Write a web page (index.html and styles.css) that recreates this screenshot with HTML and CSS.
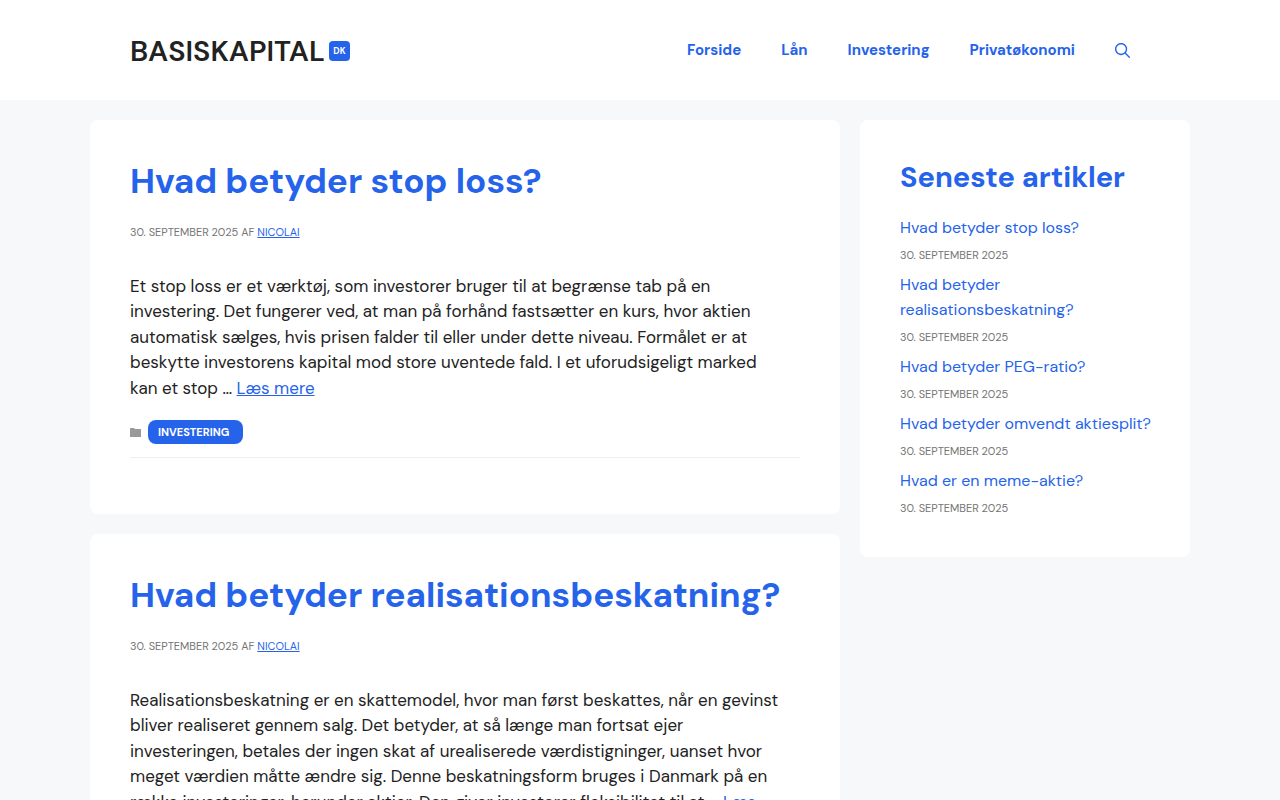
FILE: index.html
```html
<!DOCTYPE html>
<html lang="da">
<head>
    <meta charset="UTF-8">
    <meta name="viewport" content="width=device-width, initial-scale=1.0">
    <title>Basiskapital.dk</title>
    <link rel="stylesheet" href="styles.css">
</head>
<body>
    <header class="site-header">
        <div class="inside-header">
            <a class="site-logo" href="#">
                <span class="logo-name">BASISKAPITAL</span>
                <span class="logo-badge">DK</span>
            </a>
            <nav class="main-nav">
                <a href="#">Forside</a>
                <a href="#">Lån</a>
                <a href="#">Investering</a>
                <a href="#">Privatøkonomi</a>
                <a class="search-link" href="#" aria-label="Søg">
                    <svg viewBox="0 0 512 512" width="15" height="15" aria-hidden="true">
                        <path fill-rule="evenodd" clip-rule="evenodd" d="M208 48c-88.366 0-160 71.634-160 160s71.634 160 160 160 160-71.634 160-160S296.366 48 208 48zM0 208C0 93.125 93.125 0 208 0s208 93.125 208 208c0 48.741-16.765 93.566-44.843 129.024l133.826 134.018c9.366 9.379 9.355 24.575-.025 33.941-9.379 9.366-24.575 9.355-33.941-.025L337.238 370.987C301.747 399.167 256.839 416 208 416 93.125 416 0 322.875 0 208z"/>
                    </svg>
                </a>
            </nav>
        </div>
    </header>

    <div class="site-content">
        <main class="content-area">
            <article class="post">
                <h2 class="entry-title"><a href="#">Hvad betyder stop loss?</a></h2>
                <div class="entry-meta">30. september 2025 af <a href="#">Nicolai</a></div>
                <p class="entry-summary">Et stop loss er et værktøj, som investorer bruger til at begrænse tab på en investering. Det fungerer ved, at man på forhånd fastsætter en kurs, hvor aktien automatisk sælges, hvis prisen falder til eller under dette niveau. Formålet er at beskytte investorens kapital mod store uventede fald. I et uforudsigeligt marked kan et stop … <a href="#">Læs mere</a></p>
                <footer class="entry-footer">
                    <svg class="folder-icon" viewBox="0 0 11 9" width="11" height="9" aria-hidden="true">
                        <path d="M0 .5Q0 0 .5 0H4l1 1h5.500q.5 0 .5.5v7q0 .5-.5.5H.5Q0 9 0 8.500z"/>
                    </svg>
                    <a class="cat-link" href="#">Investering</a>
                </footer>
            </article>

            <article class="post">
                <h2 class="entry-title"><a href="#">Hvad betyder realisationsbeskatning?</a></h2>
                <div class="entry-meta">30. september 2025 af <a href="#">Nicolai</a></div>
                <p class="entry-summary">Realisationsbeskatning er en skattemodel, hvor man først beskattes, når en gevinst bliver realiseret gennem salg. Det betyder, at så længe man fortsat ejer investeringen, betales der ingen skat af urealiserede værdistigninger, uanset hvor meget værdien måtte ændre sig. Denne beskatningsform bruges i Danmark på en række investeringer, herunder aktier. Den giver investorer fleksibilitet til at … <a href="#">Læs mere</a></p>
                <footer class="entry-footer">
                    <svg class="folder-icon" viewBox="0 0 11 9" width="11" height="9" aria-hidden="true">
                        <path d="M0 .5Q0 0 .5 0H4l1 1h5.500q.5 0 .5.5v7q0 .5-.5.5H.5Q0 9 0 8.500z"/>
                    </svg>
                    <a class="cat-link" href="#">Investering</a>
                </footer>
            </article>
        </main>

        <aside class="sidebar">
            <h2 class="widget-title">Seneste artikler</h2>
            <ul class="latest-posts">
                <li><a href="#">Hvad betyder stop loss?</a><time datetime="2025-09-30">30. september 2025</time></li>
                <li><a href="#">Hvad betyder realisationsbeskatning?</a><time datetime="2025-09-30">30. september 2025</time></li>
                <li><a href="#">Hvad betyder PEG-ratio?</a><time datetime="2025-09-30">30. september 2025</time></li>
                <li><a href="#">Hvad betyder omvendt aktiesplit?</a><time datetime="2025-09-30">30. september 2025</time></li>
                <li><a href="#">Hvad er en meme-aktie?</a><time datetime="2025-09-30">30. september 2025</time></li>
            </ul>
        </aside>
    </div>
</body>
</html>
```
FILE: styles.css
```css
* {
    box-sizing: border-box;
}

body {
    margin: 0;
    background: #f7f8f9;
    color: #222222;
    font-family: "DM Sans", Inter, "Liberation Sans", sans-serif;
    font-size: 17px;
    line-height: 1.5;
}

a {
    color: #2563eb;
}

h2,
p,
ul {
    margin: 0;
}

/* Header */
.site-header {
    background: #ffffff;
}

.inside-header {
    display: flex;
    align-items: center;
    justify-content: space-between;
    max-width: 1100px;
    min-height: 100px;
    margin: 0 auto;
    padding: 20px 40px;
}

.site-logo {
    display: flex;
    align-items: center;
    gap: 4px;
    padding-top: 2px;
    color: #222222;
    text-decoration: none;
}

.logo-name {
    font-size: 29px;
    font-weight: 600;
    line-height: 32px;
}

.logo-badge {
    width: 21px;
    height: 20px;
    border-radius: 4px;
    background: #2563eb;
    color: #ffffff;
    font-size: 9px;
    font-weight: 700;
    line-height: 20px;
    text-align: center;
}

.main-nav {
    display: flex;
    align-items: center;
    gap: 40px;
    padding-right: 20px;
}

.main-nav a {
    font-size: 15px;
    font-weight: 700;
    text-decoration: none;
}

.search-link {
    display: flex;
}

.search-link svg {
    fill: currentColor;
}

/* Layout */
.site-content {
    display: grid;
    grid-template-columns: minmax(0, 1fr) 30%;
    gap: 20px;
    align-items: start;
    max-width: 1100px;
    margin: 0 auto;
    padding: 20px 0;
}

.content-area {
    display: grid;
    gap: 20px;
}

.post,
.sidebar {
    padding: 40px;
    border-radius: 8px;
    background: #ffffff;
}

.sidebar {
    padding-right: 32px;
}

/* Posts */
.entry-title {
    font-size: 35px;
    font-weight: 700;
    line-height: 42px;
}

.entry-title a {
    text-decoration: none;
}

.entry-meta {
    margin-top: 22px;
    color: #757575;
    font-size: 11px;
    text-transform: uppercase;
}

.entry-summary {
    margin-top: 33px;
    padding-right: 16px;
}

.entry-footer {
    display: flex;
    align-items: center;
    gap: 7px;
    margin: 19px 0 16px;
    padding-bottom: 13px;
    border-bottom: 1px solid #eeeeee;
}

.folder-icon {
    fill: #999999;
}

.cat-link {
    padding: 0 14px 0 10px;
    border-radius: 8px;
    background: #2563eb;
    color: #ffffff;
    font-size: 11px;
    font-weight: 700;
    line-height: 24px;
    text-decoration: none;
    text-transform: uppercase;
}

/* Sidebar */
.widget-title {
    margin-bottom: 20px;
    color: #2563eb;
    font-size: 29px;
    font-weight: 700;
    line-height: 35px;
}

.latest-posts {
    display: grid;
    gap: 8px;
    padding: 0;
    list-style: none;
}

.latest-posts a {
    display: block;
    font-size: 16px;
    line-height: 25px;
    text-decoration: none;
}

.latest-posts time {
    display: block;
    margin-top: 6px;
    color: #757575;
    font-size: 11px;
    line-height: 18px;
    text-transform: uppercase;
}
```
